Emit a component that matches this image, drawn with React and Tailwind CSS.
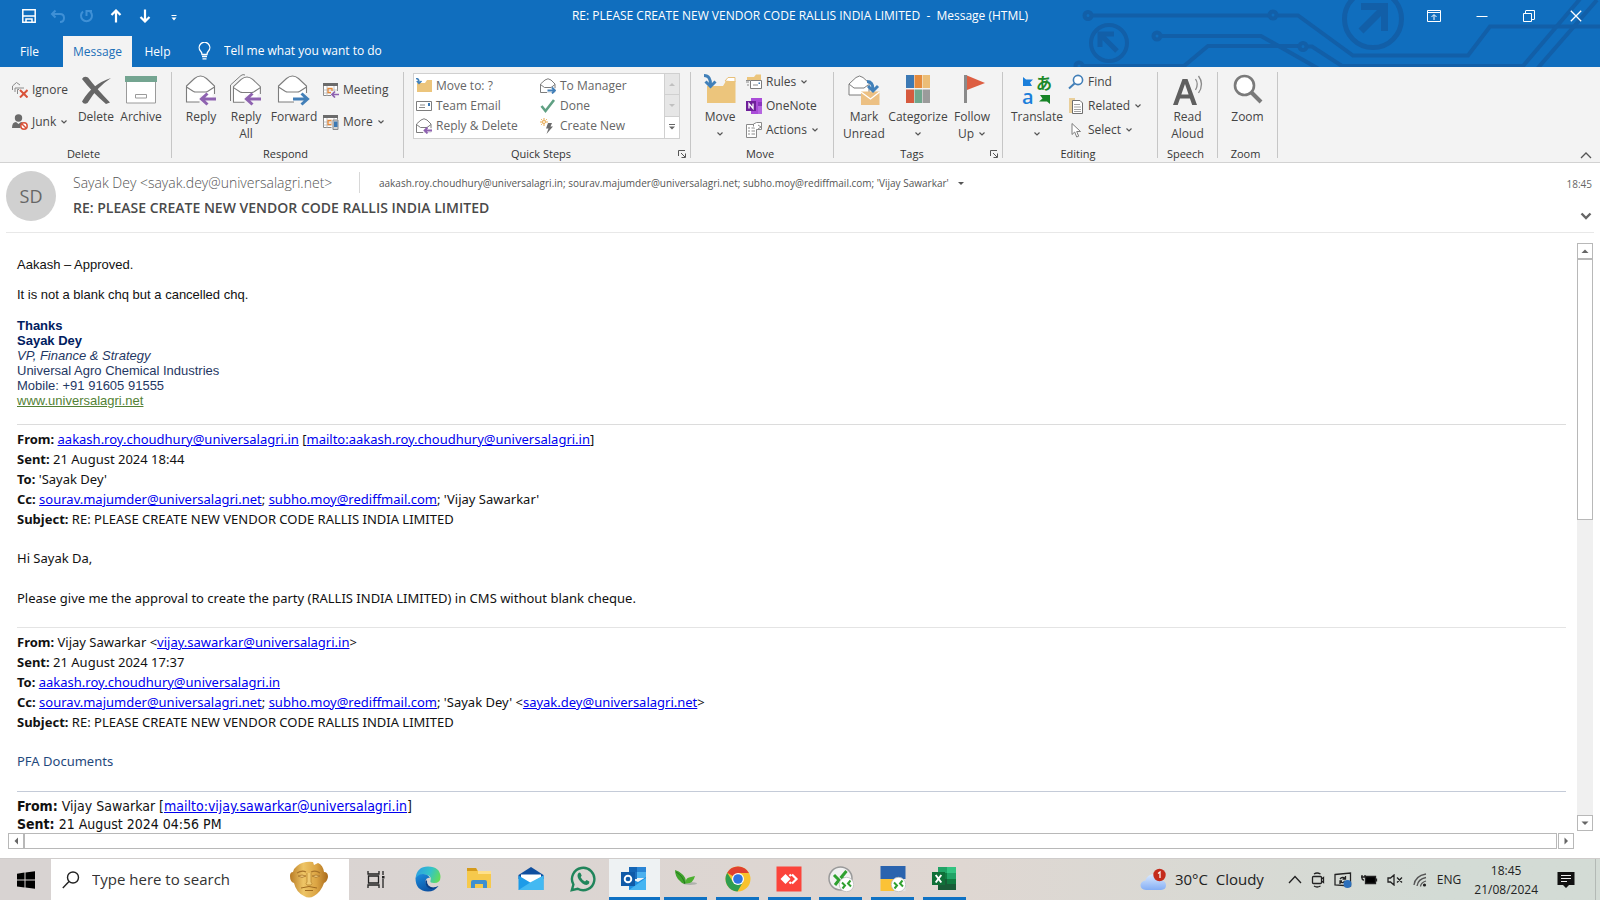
import React from "react";

const UI = "font-['Open_Sans','Noto_Sans',sans-serif]";

/* ---------- small shared glyphs ---------- */
const Caret = () => (
  <svg width="8" height="6" viewBox="0 0 8 6" fill="none" stroke="#555" strokeWidth="1.2" aria-hidden="true">
    <path d="M1.5 1.5 4 4l2.500-2.500" />
  </svg>
);

const Arrow = ({ color, flip }) => (
  <path
    d={flip ? "M15 25h14M23.500 19.500l6 5.500-6 5.500" : "M31 25H17M22.500 19.500l-6 5.500 6 5.500"}
    stroke={color}
    strokeWidth="3"
    fill="none"
  />
);

const OpenEnvelope = ({ x = 1 }) => (
  <g transform={`translate(${x} 0)`} stroke="#7d7d7d" strokeWidth="1.1">
    <path d="M.5 12 8.500 4.500Q14.500-.5 20.500 4.500L28.500 12v16H.5z" fill="#fff" />
    <path d="M.5 13 7.500 17.500q1 .5 2 .5h10q1 0 2-.5l7-4.500" fill="none" />
  </g>
);

/* ---------- ribbon icons, 32 px ---------- */
const Big = ({ children }) => (
  <svg width="32" height="32" viewBox="0 0 32 32" fill="none" className="overflow-visible" aria-hidden="true">
    {children}
  </svg>
);
const DeleteIcon = () => (
  <Big>
    <path d="M2 5Q4 1.500 8 3.500 16 14 30 28.500L26 30Q12 18 2 5Z" fill="#666" />
    <path d="M31 4Q17 13 7.500 29 4 31 2 27.500 12 10 31 4Z" fill="#666" />
  </Big>
);
const ArchiveIcon = () => (
  <Big>
    <path d="M1.500 8v21h29V8" fill="#fff" stroke="#9a9a9a" />
    <path d="M0 2h32v6H0z" fill="#74a591" />
    <path d="M10.500 20.500h11v3.500h-11z" stroke="#9a9a9a" />
  </Big>
);
const ReplyIcon = () => (
  <Big>
    <OpenEnvelope />
    <path d="M15 24h2v5h13v-9" stroke="#f3f3f3" strokeWidth="5" />
    <Arrow color="#8e62b0" />
  </Big>
);
const ReplyAllIcon = () => (
  <Big>
    <path d="M.5 27V11L11 1.500q2-1.500 4-.5" stroke="#7d7d7d" />
    <g transform="translate(3 1) scale(.96 .97)">
      <OpenEnvelope x={0} />
    </g>
    <path d="M15 24h2v5h13v-9" stroke="#f3f3f3" strokeWidth="5" />
    <Arrow color="#8e62b0" />
  </Big>
);
const ForwardIcon = () => (
  <Big>
    <OpenEnvelope x={0} />
    <path d="M16 28h13v-9" stroke="#f3f3f3" strokeWidth="5" />
    <Arrow color="#427fb8" flip />
  </Big>
);
const MoveIcon = () => (
  <Big>
    <path d="M21 7l3-3.500h7V8z" fill="#fff" stroke="#e8c07a" />
    <path d="M3 12h16l3-5h9.500v22H3z" fill="#ecc57c" />
    <path d="M0 1.500q7 0 6.500 10M1.500 7.500l5 5 5-5" stroke="#4180b9" strokeWidth="3" />
  </Big>
);
const MarkUnreadIcon = () => (
  <Big>
    <path d="M1 10 8 3.500q3.500-3 7 0L21 9v12H1z" fill="#fff" stroke="#7d7d7d" />
    <path d="M1 10l5 4h10l4-3" stroke="#7d7d7d" />
    <path d="M13 17.500h18.500V31H13z" fill="#ecc083" />
    <path d="m13 18 9.500 7L31.500 18" stroke="#fff" strokeWidth="1.300" />
    <path d="M19 7.500q6 0 6 8M20 12l5 5 5-5" stroke="#4180b9" strokeWidth="3" />
  </Big>
);
const CategorizeIcon = () => (
  <Big>
    <path d="M4 1h8v13H4z" fill="#3c79b4" />
    <path d="M12.500 1h7.500v13h-7.500z" fill="#e58a3c" />
    <path d="M20.500 1H28v13h-7.500z" fill="#ecbd76" />
    <path d="M4 15.500h8V29H4z" fill="#d65a3e" />
    <path d="M12.500 15.500h7.500V29h-7.500z" fill="#70a68d" />
    <path d="M20.500 15.500H28V29h-7.500z" fill="#9b9b9b" />
  </Big>
);
const FlagIcon = () => (
  <Big>
    <path d="M8 1h3v28H8z" fill="#8a8a8a" />
    <path d="M11 1.500 29 9 11 16z" fill="#dd5e42" />
  </Big>
);
const TranslateIcon = () => (
  <Big>
    <path d="M2 3l3 2.500h7L9 8.500l2 3.500H2z" fill="#1b7fdb" />
    <text x="15" y="15" fontSize="16" fontWeight="700" fill="#1b8a2a" fontFamily="Noto Sans CJK JP, sans-serif">あ</text>
    <text x="1" y="30" fontSize="20" fontWeight="600" fill="#1b7fdb" fontFamily="Open Sans, sans-serif">a</text>
    <path d="M29 30l-3-2.500h-8l3.500-3-2.500-3.500h10z" fill="#178427" />
  </Big>
);
const ReadAloudIcon = () => (
  <Big>
    <path d="M1 31 10.500 5h5L25 31h-4.800l-2.300-6.500H8L5.700 31zM9.300 20.500h7.300L13 10z" fill="#5f5f5f" />
    <path d="M23.500 5q3.500 5 0 11M26.500 2q6 8 0 17" stroke="#8a8a8a" strokeWidth="1.300" />
  </Big>
);
const ZoomIcon = () => (
  <Big>
    <path d="m19 18 10 10" stroke="#7a7a7a" strokeWidth="4" />
    <circle cx="12.500" cy="11.500" r="9.500" fill="#fff" stroke="#7a7a7a" strokeWidth="2.600" />
  </Big>
);

/* ---------- ribbon icons, 16 px ---------- */
const Small = ({ children }) => (
  <svg width="16" height="16" viewBox="0 0 16 16" fill="none" className="shrink-0" aria-hidden="true">
    {children}
  </svg>
);
const IgnoreIcon = () => (
  <Small>
    <path d="M.5 8V4l4-3.500L8 3M3 10V6h9M5.500 12V7.500H14" stroke="#8a8a8a" />
    <path d="M7 7h9v9H7z" fill="#f3f3f3" />
    <path d="m8 8 7.500 7.500M15.500 8 8 15.500" stroke="#d9533a" strokeWidth="2" />
  </Small>
);
const JunkIcon = () => (
  <Small>
    <circle cx="6.500" cy="4" r="3.700" fill="#6b6b6b" />
    <path d="M0 14q0-6 4-6l2.500 2L9 8q2 0 2.500 2L8 14z" fill="#6b6b6b" />
    <circle cx="12" cy="12" r="3.200" stroke="#d9533a" strokeWidth="1.500" fill="#fff" />
    <path d="m10 10 4 4" stroke="#d9533a" strokeWidth="1.500" />
  </Small>
);
const CalGrid = () => (
  <>
    <path d="M.5 1.500h14v12H.5z" fill="#fff" stroke="#8a8a8a" />
    <path d="M0 1h15v3H0z" fill="#6b6b6b" />
    <path d="M.5 8h14M.5 11h14M4 4v10M11 4v10" stroke="#b5b5b5" strokeWidth=".8" />
    <path d="M5 6.500h4v4H5z" stroke="#e58a3c" strokeWidth="1.300" />
  </>
);
const MeetingIcon = () => (
  <Small>
    <CalGrid />
    <path d="M8 9h8v7H8z" fill="#f3f3f3" />
    <path d="M16 12.500H9.500M12 9.500l-3 3 3 3" stroke="#8e62b0" strokeWidth="1.700" />
  </Small>
);
const MoreIcon = () => (
  <Small>
    <CalGrid />
    <path d="M8.500 5.500H16V16H8.500z" fill="#f3f3f3" />
    <path d="M10 6h5v9.500h-5z" fill="#d5d5d5" stroke="#8a8a8a" />
    <path d="M11 7.500h3.500V13H11z" fill="#3c79b4" />
  </Small>
);
const MiniFolderIcon = () => (
  <Small>
    <path d="M1 5h8l2-3h5v12H1z" fill="#ecc57c" />
    <path d="M0 .5q3 0 3 4M.8 3 3 5.500 5.500 3" stroke="#4180b9" strokeWidth="1.500" />
  </Small>
);
const TeamIcon = () => (
  <Small>
    <path d="M.5 3.500h15v9H.5z" fill="#fff" stroke="#7d7d7d" />
    <path d="M4 7h5M3 9.500h6" stroke="#8a8a8a" />
    <path d="M12 5h2v3h-2z" fill="#3c79b4" />
  </Small>
);
const MiniEnvelope = ({ color, flip }) => (
  <Small>
    <path d="M.5 6 5 2q3-2.500 6 0l4 4v8.500H.5z" fill="#fff" stroke="#7d7d7d" />
    <path d="m.5 6.500 4 3h6.500l4-3" stroke="#7d7d7d" />
    <path d="M7 10h9v6H7z" fill="#fff" opacity=".8" />
    {flip ? (
      <path d="M7.500 12.500H15M12 9.500l3 3-3 3" stroke={color} strokeWidth="1.800" />
    ) : (
      <path d="M16 12.500H8.500M11.500 9.500l-3 3 3 3" stroke={color} strokeWidth="1.800" />
    )}
  </Small>
);
const DoneIcon = () => (
  <Small>
    <path d="m1.500 8 4 5L14 2" stroke="#5fa083" strokeWidth="2.600" />
  </Small>
);
const CreateIcon = () => (
  <Small>
    <path d="M8 5h4l-1.500 3.500H13L6.500 16l2-5.500H6z" fill="#6b6b6b" />
    <path d="M4 0v2M4 6v2M0 4h2M6 4h2M1.200 1.200l1.300 1.300M6.800 1.200 5.500 2.500M1.200 6.800l1.300-1.300" stroke="#e8a94f" />
    <circle cx="4" cy="4" r="1.500" stroke="#e8a94f" />
  </Small>
);
const RulesIcon = () => (
  <Small>
    <path d="M1 3h7l2-2.500h5V6H1z" fill="#ecc57c" />
    <path d="M4.500 6.500h11v8h-11z" fill="#fff" stroke="#7d7d7d" />
    <path d="M7 11h5M0 8h3M1 11h2M0 6.500h4" stroke="#8a8a8a" />
    <path d="M12.500 8.500h1.500v1.500h-1.500z" fill="#3c79b4" />
  </Small>
);
const OneNoteIcon = () => (
  <Small>
    <path d="M5 0h11v16H5z" fill="#a94bd8" />
    <path d="M12 4h4v4h-4z" fill="#8a35bd" />
    <path d="M12 8h4v8h-4z" fill="#b565e0" />
    <path d="M0 3h10v10H0z" fill="#6e1f99" />
    <path d="M3 10.500v-5l4 5v-5" stroke="#fff" strokeWidth="1.300" />
  </Small>
);
const ActionsIcon = () => (
  <Small>
    <path d="M.5 2.500h10v13H.5z" fill="#fff" stroke="#8a8a8a" />
    <path d="M2 6h2M5.500 6H9M2 9h2M5.500 9H9M2 12h2M5.500 12H9" stroke="#8a8a8a" />
    <path d="M7.500 4.500V2l3-1.500h5v7h-5" fill="#fff" stroke="#8a8a8a" />
    <path d="m12 3 3 2-3 2" stroke="#8a8a8a" />
  </Small>
);
const FindIcon = () => (
  <Small>
    <circle cx="10" cy="6" r="4.600" fill="#fff" stroke="#427fb8" strokeWidth="1.600" />
    <path d="m6.500 9.500-5.500 5" stroke="#427fb8" strokeWidth="2" />
  </Small>
);
const RelatedIcon = () => (
  <Small>
    <path d="M1 0h6v15H1z" fill="#e9cf9b" />
    <path d="M4.500 2.500H12l2.500 2.500v10.500h-10z" fill="#fff" stroke="#6f6f6f" />
    <path d="M6 6.500h6M6 9h7M6 11.500h7M6 13.500h7" stroke="#8a8a8a" strokeWidth=".8" />
  </Small>
);
const SelectIcon = () => (
  <Small>
    <path d="M4 1.500v11l2.700-2.500 2 5 2-.8-2-4.700h3.800z" fill="#fff" stroke="#7d7d7d" />
  </Small>
);
const Launcher = () => (
  <button aria-label="Open dialog" className="h-2 w-2">
    <svg width="8" height="8" viewBox="0 0 8 8" fill="none" stroke="#555" aria-hidden="true">
      <path d="M.5 6V.5H7M3 3l4 4M7.500 3.500v4h-4" />
    </svg>
  </button>
);

/* ---------- ribbon building blocks ---------- */
const Group = ({ label, width, pad, launcher, children }) => (
  <section aria-label={label} className={`flex shrink-0 flex-col ${width}`}>
    <div className={`flex h-[79px] items-start pt-[7px] ${pad}`}>{children}</div>
    <div className="flex h-4 items-center pr-1">
      <span className="flex-1 text-center text-[11px] leading-4 text-[#333]">{label}</span>
      {launcher && <Launcher />}
    </div>
  </section>
);
const Rule = () => <div className="mt-[5px] h-[86px] w-px shrink-0 bg-[#c6c6c6]" />;

const BigButton = ({ icon, lines, width, caret }) => (
  <button className={`flex shrink-0 flex-col items-center ${width}`}>
    {icon}
    <span className="mt-[2px] whitespace-nowrap leading-[17px]">{lines[0]}</span>
    <span className="flex h-[17px] items-center gap-1 whitespace-nowrap leading-[17px]">
      {lines[1]}
      {caret && <Caret />}
    </span>
  </button>
);
const SmallButton = ({ icon, text, caret }) => (
  <button className="flex h-6 items-center gap-1 whitespace-nowrap leading-6">
    {icon}
    {text}
    {caret && <Caret />}
  </button>
);
const StepButton = ({ icon, text }) => (
  <button className="flex h-5 items-center gap-1 whitespace-nowrap leading-5">
    {icon}
    {text}
  </button>
);

/* ---------- title bar ---------- */
const Circuit = () => (
  <svg
    className="pointer-events-none absolute right-0 top-0"
    width="540"
    height="67"
    viewBox="1060 0 540 67"
    fill="none"
    stroke="#125fa8"
    strokeWidth="4"
    aria-hidden="true"
  >
    <circle cx="1088" cy="15.500" r="3.500" />
    <path d="M1092 15.500h177M1278 15.500h20l55 40h115l22-29h110" />
    <circle cx="1273" cy="15" r="3.500" />
    <circle cx="1157" cy="36" r="3.500" />
    <path d="M1161 36h100l58 33" />
    <circle cx="1079" cy="66" r="3.500" />
    <path d="M1083 66h101l24-20h91M1307 46.500h5l30 19.500h181l57-67M1537 69l60-69" />
    <circle cx="1303" cy="46.500" r="3.500" />
    <circle cx="1109" cy="43" r="18" />
    <path d="m1117 51-15-15M1100 47V34h14" strokeWidth="5" />
    <circle cx="1373" cy="19" r="28.500" strokeWidth="5" />
    <path d="m1361 31 22-22M1361 6.500h23.500V31" strokeWidth="7" />
  </svg>
);

const TitleBar = () => (
  <header className="relative shrink-0 bg-[#106ebe] text-white">
    <Circuit />
    <div className="relative grid h-9 grid-cols-[1fr_auto_1fr] items-start">
      <div className="flex h-8 items-center gap-[14px] pl-[22px]">
        <button aria-label="Save">
          <svg width="14" height="14" viewBox="0 0 14 14" fill="none" stroke="#fff" strokeWidth="1.500" aria-hidden="true">
            <path d="M.8.8h12.400v12.400H.8zM1 7h12M4 13v-3h6v3" />
          </svg>
        </button>
        <button aria-label="Undo">
          <svg width="15" height="14" viewBox="0 0 15 14" fill="none" stroke="#3f90d6" strokeWidth="2" aria-hidden="true">
            <path d="M5.500 1.500 2 5l3.500 3.500M2 5h8q4 0 4 4t-4 4" />
          </svg>
        </button>
        <button aria-label="Redo">
          <svg width="15" height="14" viewBox="0 0 15 14" fill="none" stroke="#3f90d6" strokeWidth="2" aria-hidden="true">
            <path d="M4 2.500a5.500 5.500 0 1 0 7 0M7.500 7V2H13" />
          </svg>
        </button>
        <button aria-label="Previous item" className="ml-[2px]">
          <svg width="12" height="14" viewBox="0 0 12 14" fill="none" stroke="#fff" strokeWidth="2.200" aria-hidden="true">
            <path d="M6 13.500V2M1.500 6 6 1.500 10.500 6" />
          </svg>
        </button>
        <button aria-label="Next item" className="ml-[3px]">
          <svg width="12" height="14" viewBox="0 0 12 14" fill="none" stroke="#fff" strokeWidth="2.200" aria-hidden="true">
            <path d="M6 .5V12M1.500 8 6 12.500 10.500 8" />
          </svg>
        </button>
        <button aria-label="Customize toolbar" className="ml-[6px] pt-1">
          <svg width="6" height="6" viewBox="0 0 6 6" aria-hidden="true">
            <path d="M.5 0h5v1h-5zM.5 2.500h5L3 5.500z" fill="#fff" />
          </svg>
        </button>
      </div>
      <h1 className="whitespace-pre text-[12px] leading-8">
        {"RE: PLEASE CREATE NEW VENDOR CODE RALLIS INDIA LIMITED  -  Message (HTML)"}
      </h1>
      <div className="flex h-8 items-center justify-end gap-[35px] pr-[18px]">
        <button aria-label="Ribbon display options">
          <svg width="14" height="12" viewBox="0 0 14 12" fill="none" stroke="#fff" aria-hidden="true">
            <path d="M.5.5h13v11H.5zM.5 2.500h13M7 10V5M4.500 7 7 4.500 9.500 7" />
          </svg>
        </button>
        <button aria-label="Minimize">
          <svg width="12" height="12" viewBox="0 0 12 12" stroke="#fff" aria-hidden="true">
            <path d="M.5 6.500h11" />
          </svg>
        </button>
        <button aria-label="Restore">
          <svg width="12" height="12" viewBox="0 0 12 12" fill="none" stroke="#fff" aria-hidden="true">
            <path d="M.5 3.500h8v8h-8zM2.500 3V1q0-.5.5-.5h8.500V9q0 .5-.5.500H9" />
          </svg>
        </button>
        <button aria-label="Close">
          <svg width="12" height="12" viewBox="0 0 12 12" stroke="#fff" strokeWidth="1.300" aria-hidden="true">
            <path d="m.8.8 10.400 10.400M11.200.8.8 11.200" />
          </svg>
        </button>
      </div>
    </div>
    <nav className="relative flex h-[31px] text-[12px] leading-[30px]">
      <button className="w-[63px] pr-1">File</button>
      <button className="w-[69px] bg-[#f3f3f3] text-[#1a6fb8]">Message</button>
      <button className="w-[51px]">Help</button>
      <label className="flex h-[30px] items-center gap-[13px] pl-[15px]">
        <svg width="13" height="18" viewBox="0 0 13 18" fill="none" stroke="#fff" strokeWidth="1.300" aria-hidden="true">
          <path d="M4 12.500Q4 10.500 2.500 9A5.300 5.300 0 1 1 10.500 9Q9 10.500 9 12.500zM4 14.500h5M4.500 16.800h4" />
        </svg>
        <input
          aria-label="Tell me what you want to do"
          placeholder="Tell me what you want to do"
          className="w-64 bg-transparent outline-none placeholder:text-white"
        />
      </label>
    </nav>
  </header>
);

const Ribbon = () => (
  <div className="flex h-24 shrink-0 border-b border-[#d2d2d2] bg-[#f3f3f3] text-[12px] text-[#444]">
    <Group label="Delete" width="w-[171px]" pad="pl-3">
      <div className="flex w-[62px] shrink-0 flex-col gap-2 pt-1">
        <SmallButton icon={<IgnoreIcon />} text="Ignore" />
        <SmallButton icon={<JunkIcon />} text="Junk" caret />
      </div>
      <BigButton icon={<DeleteIcon />} lines={["Delete"]} width="w-11" />
      <BigButton icon={<ArchiveIcon />} lines={["Archive"]} width="w-[46px]" />
    </Group>
    <Rule />
    <Group label="Respond" width="w-[231px]" pad="pl-2">
      <BigButton icon={<ReplyIcon />} lines={["Reply"]} width="w-[42px]" />
      <BigButton icon={<ReplyAllIcon />} lines={["Reply", "All"]} width="w-12" />
      <BigButton icon={<ForwardIcon />} lines={["Forward"]} width="w-12" />
      <div className="flex flex-col gap-2 pl-[5px] pt-1">
        <SmallButton icon={<MeetingIcon />} text="Meeting" />
        <SmallButton icon={<MoreIcon />} text="More" caret />
      </div>
    </Group>
    <Rule />
    <Group label="Quick Steps" width="w-[286px]" pad="pl-[9px]" launcher>
      <div className="-mt-px flex h-[66px] w-[267px] border border-[#d0d0d0] bg-white text-[#666]">
        <div className="grid flex-1 grid-cols-2 content-start pl-[2px] pt-[2px]">
          <StepButton icon={<MiniFolderIcon />} text="Move to: ?" />
          <StepButton icon={<MiniEnvelope color="#427fb8" flip />} text="To Manager" />
          <StepButton icon={<TeamIcon />} text="Team Email" />
          <StepButton icon={<DoneIcon />} text="Done" />
          <StepButton icon={<MiniEnvelope color="#8e62b0" />} text="Reply & Delete" />
          <StepButton icon={<CreateIcon />} text="Create New" />
        </div>
        <div className="grid w-[15px] grid-rows-3 divide-y divide-[#d0d0d0] border-l border-[#d0d0d0]">
          <button aria-label="Scroll up" className="grid place-items-center bg-[#e6e6e6]">
            <svg width="6" height="3" viewBox="0 0 6 3" aria-hidden="true"><path d="M3 0 6 3H0z" fill="#c0c0c0" /></svg>
          </button>
          <button aria-label="Scroll down" className="grid place-items-center bg-[#e6e6e6]">
            <svg width="6" height="3" viewBox="0 0 6 3" aria-hidden="true"><path d="M3 3 6 0H0z" fill="#c0c0c0" /></svg>
          </button>
          <button aria-label="More quick steps" className="grid place-items-center">
            <svg width="6" height="6" viewBox="0 0 6 6" aria-hidden="true"><path d="M0 0h6v1H0zM0 2.500h6L3 5.500z" fill="#666" /></svg>
          </button>
        </div>
      </div>
    </Group>
    <Rule />
    <Group label="Move" width="w-[142px]" pad="pl-2">
      <BigButton icon={<MoveIcon />} lines={["Move"]} width="w-[42px]" caret />
      <div className="-mt-1 flex flex-col pl-[5px]">
        <SmallButton icon={<RulesIcon />} text="Rules" caret />
        <SmallButton icon={<OneNoteIcon />} text="OneNote" />
        <SmallButton icon={<ActionsIcon />} text="Actions" caret />
      </div>
    </Group>
    <Rule />
    <Group label="Tags" width="w-[168px]" pad="pl-1" launcher>
      <BigButton icon={<MarkUnreadIcon />} lines={["Mark", "Unread"]} width="w-[52px]" />
      <BigButton icon={<CategorizeIcon />} lines={["Categorize"]} width="w-[56px]" caret />
      <BigButton icon={<FlagIcon />} lines={["Follow", "Up"]} width="w-[52px]" caret />
    </Group>
    <Rule />
    <Group label="Editing" width="w-[154px]" pad="pl-2">
      <BigButton icon={<TranslateIcon />} lines={["Translate"]} width="w-[52px]" caret />
      <div className="-mt-1 flex flex-col pl-[5px]">
        <SmallButton icon={<FindIcon />} text="Find" />
        <SmallButton icon={<RelatedIcon />} text="Related" caret />
        <SmallButton icon={<SelectIcon />} text="Select" caret />
      </div>
    </Group>
    <Rule />
    <Group label="Speech" width="w-[59px]" pad="justify-center">
      <BigButton icon={<ReadAloudIcon />} lines={["Read", "Aloud"]} width="w-12" />
    </Group>
    <Rule />
    <Group label="Zoom" width="w-[59px]" pad="justify-center">
      <BigButton icon={<ZoomIcon />} lines={["Zoom"]} width="w-12" />
    </Group>
    <Rule />
    <button aria-label="Collapse the ribbon" className="mb-[3px] ml-auto mr-2 self-end">
      <svg width="12" height="7" viewBox="0 0 12 7" fill="none" stroke="#555" strokeWidth="1.300" aria-hidden="true">
        <path d="m1 6 5-5 5 5" />
      </svg>
    </button>
  </div>
);

const MessageHeader = () => (
  <section className="mx-[6px] flex h-[70px] shrink-0 border-b border-[#e8e8e8]">
    <div className="mt-2 grid size-[50px] shrink-0 place-items-center rounded-full bg-[#d0d0d0] text-[18px] text-[#666]">
      SD
    </div>
    <div className="flex min-w-0 flex-1 flex-col pl-[17px] pt-2">
      <div className="flex h-[22px] items-center">
        <span className="w-[286px] whitespace-nowrap text-[14px] font-light text-[#555]">
          Sayak Dey &lt;sayak.dey@universalagri.net&gt;
        </span>
        <span className="h-[21px] w-px bg-[#d8d8d8]" />
        <span className="whitespace-nowrap pl-[19px] pt-[2px] text-[10px] text-[#555]">
          aakash.roy.choudhury@universalagri.in; sourav.majumder@universalagri.net; subho.moy@rediffmail.com; 'Vijay Sawarkar'
        </span>
        <button aria-label="Show all recipients" className="ml-[9px] pt-[2px]">
          <svg width="6" height="3" viewBox="0 0 6 3" aria-hidden="true"><path d="M0 0h6L3 3z" fill="#555" /></svg>
        </button>
      </div>
      <h2 className="mt-[3px] text-[14px] font-semibold leading-6 text-[#4a4a4a]">
        RE: PLEASE CREATE NEW VENDOR CODE RALLIS INDIA LIMITED
      </h2>
    </div>
    <div className="flex flex-col items-end justify-between pb-3 pr-[2px] pt-[13px] text-[10px] leading-4 text-[#666]">
      <time>18:45</time>
      <button aria-label="Expand header">
        <svg width="12" height="8" viewBox="0 0 12 8" fill="none" stroke="#666" strokeWidth="2.400" aria-hidden="true">
          <path d="m1.500 1.500 4.500 4.500 4.500-4.500" />
        </svg>
      </button>
    </div>
  </section>
);

/* ---------- message body ---------- */
const Mail = ({ to, children }) => (
  <a href={`mailto:${to}`} className="text-[#0000ee] underline">
    {children || to}
  </a>
);
const AAKASH = "aakash.roy.choudhury@universalagri.in";
const SOURAV = "sourav.majumder@universalagri.net";
const SUBHO = "subho.moy@rediffmail.com";
const VIJAY = "vijay.sawarkar@universalagri.in";

const Message = () => (
  <article className="min-w-0 flex-1 overflow-hidden pl-[17px] pr-[11px] pt-6 font-['Noto_Sans','Open_Sans',sans-serif] text-[13px] text-[#111]">
    <div className="font-['Liberation_Sans',Arial,sans-serif] leading-[15px]">
      <p>Aakash – Approved.</p>
      <p className="mt-[15px]">It is not a blank chq but a cancelled chq.</p>
      <div className="mt-4 text-[#1f3864]">
        <p className="font-bold text-[#002060]">Thanks</p>
        <p className="font-bold text-[#002060]">Sayak Dey</p>
        <p className="italic">VP, Finance &amp; Strategy</p>
        <p>Universal Agro Chemical Industries</p>
        <p>Mobile: +91 91605 91555</p>
        <a href="http://www.universalagri.net" className="block text-[#538135] underline">www.universalagri.net</a>
      </div>
    </div>
    <div className="mt-4 whitespace-nowrap border-t border-[#dcdcdc] pt-1 leading-5">
      <p><b>From:</b> <Mail to={AAKASH} /> [<Mail to={AAKASH}>mailto:{AAKASH}</Mail>]</p>
      <p><b>Sent:</b> 21 August 2024 18:44</p>
      <p><b>To:</b> 'Sayak Dey'</p>
      <p><b>Cc:</b> <Mail to={SOURAV} />; <Mail to={SUBHO} />; 'Vijay Sawarkar'</p>
      <p><b>Subject:</b> RE: PLEASE CREATE NEW VENDOR CODE RALLIS INDIA LIMITED</p>
      <p className="mt-[19px]">Hi Sayak Da,</p>
      <p className="mt-5">Please give me the approval to create the party (RALLIS INDIA LIMITED) in CMS without blank cheque.</p>
    </div>
    <div className="mt-[19px] whitespace-nowrap border-t border-[#e4e4e4] pt-1 leading-5">
      <p><b>From:</b> Vijay Sawarkar &lt;<Mail to={VIJAY} />&gt;</p>
      <p><b>Sent:</b> 21 August 2024 17:37</p>
      <p><b>To:</b> <Mail to={AAKASH} /></p>
      <p><b>Cc:</b> <Mail to={SOURAV} />; <Mail to={SUBHO} />; 'Sayak Dey' &lt;<Mail to="sayak.dey@universalagri.net" />&gt;</p>
      <p><b>Subject:</b> RE: PLEASE CREATE NEW VENDOR CODE RALLIS INDIA LIMITED</p>
      <p className="mt-[19px] text-[#1f497d]">PFA Documents</p>
    </div>
    <div className="mt-5 whitespace-nowrap border-t border-[#c4cbd8] pt-[5px] font-['DejaVu_Sans_Condensed','DejaVu_Sans',sans-serif] text-[14px] leading-[18px]">
      <p><b>From:</b> Vijay Sawarkar [<Mail to={VIJAY}>mailto:{VIJAY}</Mail>]</p>
      <p><b>Sent:</b> 21 August 2024 04:56 PM</p>
    </div>
  </article>
);

const ScrollButton = ({ label, d }) => (
  <button aria-label={label} className="grid size-4 shrink-0 place-items-center border border-[#b8b8b8] bg-white">
    <svg width="8" height="8" viewBox="0 0 8 8" aria-hidden="true"><path d={d} fill="#666" /></svg>
  </button>
);

const Reader = () => (
  <main className="flex min-h-0 flex-1 flex-col pb-[9px]">
    <div className="flex min-h-0 flex-1">
      <Message />
      <div className="mb-[2px] mr-[7px] mt-[10px] flex w-4 shrink-0 flex-col bg-[#f0f0f0]">
        <ScrollButton label="Scroll up" d="M4 2.500 7.500 6h-7z" />
        <div className="h-[261px] border border-[#b8b8b8] bg-white" />
        <div className="flex-1" />
        <ScrollButton label="Scroll down" d="M4 6 7.500 2.500h-7z" />
      </div>
    </div>
    <div className="flex h-4 pl-2 pr-[26px]">
      <ScrollButton label="Scroll left" d="M2.500 4 6 .5v7z" />
      <div className="mr-px flex-1 border border-[#b8b8b8] bg-white" />
      <ScrollButton label="Scroll right" d="M6 4 2.500.5v7z" />
    </div>
  </main>
);

/* ---------- taskbar ---------- */
const App26 = ({ children }) => (
  <svg width="26" height="26" viewBox="0 0 26 26" fill="none" aria-hidden="true">{children}</svg>
);
const EdgeLogo = () => (
  <App26>
    <defs>
      <linearGradient id="edgeTop" x1="0" x2="1" y1=".3" y2=".6"><stop stopColor="#2c9fe3" /><stop offset=".55" stopColor="#34c3c8" /><stop offset="1" stopColor="#62dc5a" /></linearGradient>
      <linearGradient id="edgeLow" x1="0" x2=".6" y1="0" y2="1"><stop stopColor="#1b8fe0" /><stop offset="1" stopColor="#0c4fa0" /></linearGradient>
    </defs>
    <path d="M.5 12Q2 .5 13 .5q12 0 12.500 10.500 0 6-6.500 6-4.500 0-3.500-2.500 1.500-4-3-5.500Q5 7 .5 12z" fill="url(#edgeTop)" />
    <path d="M.5 12Q4 7.500 9.500 8.200 14 9 14.800 12q-3-.7-4.300 2.500-.7 6.500 6.500 7.500 4 0 6.500-2-4 5.500-10.500 5.500Q.5 25 .5 12z" fill="url(#edgeLow)" />
    <path d="M10.500 14.500q-1 6 5 8.500 4.500.5 8-3-6 3-10-.5-2-2-1.500-5z" fill="#0a3f86" />
  </App26>
);
const ExplorerLogo = () => (
  <App26>
    <path d="M1 2h9l2 3h13v17H1z" fill="#f6c94c" />
    <path d="M1 2h9l1.500 3H1z" fill="#d49a1c" />
    <path d="M12 5h13v3H12z" fill="#ffe08a" />
    <path d="M5 22v-6q0-2 2-2h12q2 0 2 2v6h-4v-4H9v4z" fill="#3f8fd0" />
  </App26>
);
const MailLogo = () => (
  <App26>
    <path d="M.5 9 13 1l12.500 8v4H.5z" fill="#0f4f9f" />
    <path d="M3 8.500h20V13l-10 5L3 13z" fill="#fff" />
    <path d="M.5 9.500 13 17l12.500-7.500V24H.5z" fill="#1d9be8" />
    <path d="M.5 24 13 16l12.500-6.500V24z" fill="#43b9f2" />
  </App26>
);
const WhatsAppLogo = () => (
  <App26>
    <path d="M1.800 24.200l1.600-5.700A11.200 11.200 0 1 1 7.700 22.800z" stroke="#20855b" strokeWidth="2.400" />
    <path d="M8.500 7q1-1.200 2 0l1.200 2.600-1 1.600q1.500 3 4.300 4.200l1.600-1.400 2.700 1.400q.3 3-3 3.500Q12 18.500 8.500 13q-2-3.500 0-6z" fill="#20855b" />
  </App26>
);
const OutlookLogo = () => (
  <App26>
    <path d="M8 1h17v10H8z" fill="#1465b5" />
    <path d="M16 1h9v5h-9z" fill="#2a86d6" />
    <path d="M16 6h9v6h-9z" fill="#4cb1ee" />
    <path d="M8 6h8v7H8z" fill="#1c6fc0" />
    <path d="M8 12l9 4 8-5v13H8z" fill="#1e8fe0" />
    <path d="m25 12-17 12h17z" fill="#46b5f2" />
    <path d="M0 6h14v14H0z" fill="#0f5aa8" />
    <circle cx="7" cy="13" r="3.300" stroke="#fff" strokeWidth="1.900" />
  </App26>
);
const LeafLogo = () => (
  <App26>
    <ellipse cx="17" cy="17.500" rx="7" ry="1.500" fill="#8f9a92" opacity=".6" />
    <path d="M2 4q4 1 7 4 4 3 4 9Q10 19 7 15 2 11 2 4z" fill="#3fa32c" />
    <path d="M13 17.500q-1-5 3-6 3-1 6-1.500-2 8-9 7.500z" fill="#4cb030" />
    <path d="M3 6q7 4 9 12" stroke="#24791b" />
  </App26>
);
const ChromeLogo = () => (
  <App26>
    <circle cx="13" cy="13" r="12.500" fill="#f9c22d" />
    <path d="M13 13 2.200 6.700A12.500 12.500 0 0 1 23.900 7H13z" fill="#e0402f" />
    <path d="M2.200 6.700A12.500 12.500 0 0 0 12.500 25.500L18 16l-10 0z" fill="#2f9e4f" />
    <circle cx="13" cy="13" r="6" fill="#fff" />
    <circle cx="13" cy="13" r="4.800" fill="#2f74e0" />
  </App26>
);
const AnyDeskLogo = () => (
  <App26>
    <path d="M.5.5h25v25H.5z" fill="#fb443b" />
    <path d="M9.500 8 14.500 13l-5 5-5-5z" fill="#fff" />
    <path d="m13.500 8.500 1.500 1.500M13.500 17.500l1.500-1.500M16 8.500l4.500 4.500-4.500 4.500" stroke="#fff" strokeWidth="2.200" />
  </App26>
);
const RemoteBadge = () => (
  <>
    <circle cx="18.500" cy="18.500" r="7.200" fill="#fff" stroke="#bdbdbd" strokeWidth=".8" />
    <path d="m14 16.500 3 3-2.500 3M22.500 14.500l-2.500 3 3 3" stroke="#2fa12f" strokeWidth="2" />
  </>
);
const RemoteLogo = () => (
  <App26>
    <circle cx="12.500" cy="12.500" r="11.500" fill="#f2f2f2" stroke="#9a9a9a" strokeWidth="1.500" />
    <path d="m6 9 5 5-4 5M18.500 5l-5 6 3 3" stroke="#2fa12f" strokeWidth="3" />
    <RemoteBadge />
  </App26>
);
const DesktopLogo = () => (
  <App26>
    <path d="M.5 0h25v13H.5z" fill="#2a63ae" />
    <path d="M.5 13H14v12H.5z" fill="#fbc236" />
    <path d="M14 13h11.500v12H14z" fill="#e6e6e6" />
    <RemoteBadge />
  </App26>
);
const ExcelLogo = () => (
  <App26>
    <path d="M7 1h18v23H7z" fill="#21a366" />
    <path d="M16 1h9v6h-9z" fill="#33c481" />
    <path d="M7 7h9v6H7z" fill="#107c41" />
    <path d="M7 13h18v11H7z" fill="#185c37" />
    <path d="M16 13h9v5h-9z" fill="#107c41" />
    <path d="M1 6h13v13H1z" fill="#0f7038" />
    <path d="m4.700 9 5.600 7.500M10.300 9l-5.600 7.500" stroke="#fff" strokeWidth="2" />
  </App26>
);
const MaskPicture = () => (
  <svg width="40" height="38" viewBox="0 0 40 38" fill="none" aria-hidden="true">
    <defs>
      <linearGradient id="gold" x1="0" x2="1"><stop stopColor="#b87a24" /><stop offset=".35" stopColor="#eec566" /><stop offset=".7" stopColor="#dba443" /><stop offset="1" stopColor="#a96a1c" /></linearGradient>
    </defs>
    <path d="M8 5Q14 0 24 1l1 3 4-2q5 2 6 9 4 0 4 5-1 5-4 6-3 9-10 13-5 3-10 0Q7 31 5 22q-4-1-4-7 0-4 3-4 1-4 4-6z" fill="url(#gold)" />
    <path d="M8 12q5-3 9-1M22 11q5-2 9 1" stroke="#a8742a" strokeWidth="1.200" />
    <path d="M9 15q4-2 8 0-4 3-8 0M23 15q4-2 8 0-4 3-8 0" fill="#f0cd7c" stroke="#a8742a" strokeWidth=".8" />
    <path d="M18 12v9q-2 2 0 3h4q2-1 0-3v-9" stroke="#b9852f" strokeWidth=".8" fill="#f0cb73" />
    <path d="M12 27q8-3 16 0M16 29.500h8" stroke="#a06a20" />
  </svg>
);

const apps = [
  { name: "Edge", Logo: EdgeLogo },
  { name: "File Explorer", Logo: ExplorerLogo },
  { name: "Mail", Logo: MailLogo },
  { name: "WhatsApp", Logo: WhatsAppLogo },
  { name: "Outlook", Logo: OutlookLogo, active: true },
  { name: "Leaf", Logo: LeafLogo, running: true },
  { name: "Chrome", Logo: ChromeLogo, running: true },
  { name: "AnyDesk", Logo: AnyDeskLogo, running: true },
  { name: "Remote client", Logo: RemoteLogo, running: true },
  { name: "Remote desktop", Logo: DesktopLogo, running: true },
  { name: "Excel", Logo: ExcelLogo, running: true },
];

const Tray = ({ w = 18, h = 18, label, children }) => (
  <button aria-label={label}>
    <svg width={w} height={h} viewBox={`0 0 ${w} ${h}`} fill="none" stroke="#222" strokeWidth="1.300" aria-hidden="true">
      {children}
    </svg>
  </button>
);

const Taskbar = () => (
  <footer className="flex h-[42px] shrink-0 items-stretch border-t border-[#cfcccb] bg-linear-to-r from-[#d8d3d2] from-10% via-[#dfd7d2] via-60% to-[#d3dbd5] to-90% text-[#222]">
    <button aria-label="Start" className="grid w-[51px] place-items-center">
      <svg width="18" height="18" viewBox="0 0 18 18" fill="#000" aria-hidden="true">
        <path d="M0 2.700 7.500 1.600v7H0zM8.500 1.500 18 .2v8.400H8.500zM0 9.500h7.500v7L0 15.400zM8.500 9.500H18v8.300l-9.500-1.300z" />
      </svg>
    </button>
    <label className="flex w-[298px] items-center bg-white pl-[11px] pr-5">
      <svg width="18" height="18" viewBox="0 0 18 18" fill="none" stroke="#222" strokeWidth="1.400" aria-hidden="true">
        <circle cx="11" cy="6.500" r="5.500" />
        <path d="M7 10.500.8 17" />
      </svg>
      <input
        aria-label="Type here to search"
        placeholder="Type here to search"
        className="ml-3 min-w-0 flex-1 bg-transparent text-[15px] outline-none placeholder:text-[#333]"
      />
      <MaskPicture />
    </label>
    <button aria-label="Task view" className="grid w-[53px] place-items-center">
      <svg width="18" height="17" viewBox="0 0 18 17" fill="none" stroke="#222" strokeWidth="1.300" aria-hidden="true">
        <path d="M1 0v3h11V0M1 17v-3h11v3M1.500 5h10v7h-10zM16 0v4M16 8v9" />
        <path d="M15 5h2.500v2.500H15z" fill="#222" stroke="none" />
      </svg>
    </button>
    <div className="grid w-[568px] grid-cols-11">
      {apps.map(({ name, Logo, active, running }) => (
        <button
          key={name}
          aria-label={name}
          className={`flex flex-col items-center justify-between pt-[7px] ${active ? "bg-[#eef2f3]" : ""}`}
        >
          <Logo />
          <span className={`h-[3px] ${active ? "w-full bg-[#0f72c4]" : running ? "w-[43px] bg-[#0f72c4]" : "w-0"}`} />
        </button>
      ))}
    </div>
    <div className="ml-auto flex items-center text-[15px]">
      <button className="flex items-center gap-2">
        <svg width="27" height="24" viewBox="0 0 27 24" aria-hidden="true">
          <defs>
            <linearGradient id="cloud" x1="0" x2="0" y1="0" y2="1"><stop stopColor="#dcebff" /><stop offset="1" stopColor="#84aef5" /></linearGradient>
          </defs>
          <path d="M6 22q-5.500-.5-5.500-5Q1 13 5.500 12.500 7.500 6 14 6q6 .5 7.500 6.500 4.500.5 4.500 5 0 4-5 4.500z" fill="url(#cloud)" />
          <circle cx="19.500" cy="7" r="6.200" fill="#c42b1c" />
          <path d="M18 5.500 20 4v6" stroke="#fff" strokeWidth="1.200" fill="none" />
        </svg>
        <span className="whitespace-pre">{"30°C  Cloudy"}</span>
      </button>
      <div className="ml-6 flex items-center gap-[9px]">
        <Tray w={14} h={9} label="Show hidden icons"><path d="m1 8 6-6.500L13 8" /></Tray>
        <Tray w={14} h={16} label="Meet now"><path d="M2.500 4.500h7q1 0 1 1v5q0 1-1 1h-7q-1 0-1-1v-5q0-1 1-1zM10.500 7l2-1.500v5l-2-1.500M3 2q3-2 6.500 0M3 14q3 2 6.500 0" /></Tray>
        <Tray w={18} h={16} label="Updates"><path d="M1 2.500 16.500 1v13L1 13zM6 7q2.500-3 5-.5M11.500 4v3h-3M11 9q-2.500 3-5 .5M6 12V9h2" /><circle cx="13.500" cy="12" r="4" fill="#2b6fbb" stroke="none" /></Tray>
        <Tray w={17} h={12} label="Battery"><path d="M4.500 2.500h10v7h-10z" fill="#000" /><path d="M15.500 4.500v3M1 1v3q0 2 2 2M0 3h4V1" /></Tray>
        <Tray w={17} h={12} label="Volume muted"><path d="M1 4h2.500L7 1v10L3.500 8H1zM10 3.500l5 5M15 3.500l-5 5" /></Tray>
        <Tray w={15} h={14} label="Wi-Fi"><path d="M1 12Q2 3 13 1M4 13q1-7 9-8.500M7.500 13.500q.5-4 5.500-5.500" stroke="#555" /><circle cx="11.500" cy="12" r="1.600" fill="#222" stroke="none" /></Tray>
        <span className="text-[12px]">ENG</span>
      </div>
      <time className="ml-[13px] text-center text-[12px] leading-[19px]">
        18:45
        <br />
        21/08/2024
      </time>
      <button aria-label="Notifications" className="ml-[19px]">
        <svg width="18" height="18" viewBox="0 0 18 18" aria-hidden="true">
          <path d="M.5 1h17v13H12l-3 3-3-3H.5z" fill="#111" />
          <path d="M4 4.500h10M4 7.500h10M4 10.500h6" stroke="#eee" />
        </svg>
      </button>
      <div className="ml-5 mr-1 h-[41px] w-px bg-[#b3b9b5]" />
    </div>
  </footer>
);

export default function App() {
  return (
    <div className={`flex h-screen flex-col overflow-hidden bg-white ${UI}`}>
      <TitleBar />
      <Ribbon />
      <MessageHeader />
      <Reader />
      <Taskbar />
    </div>
  );
}
